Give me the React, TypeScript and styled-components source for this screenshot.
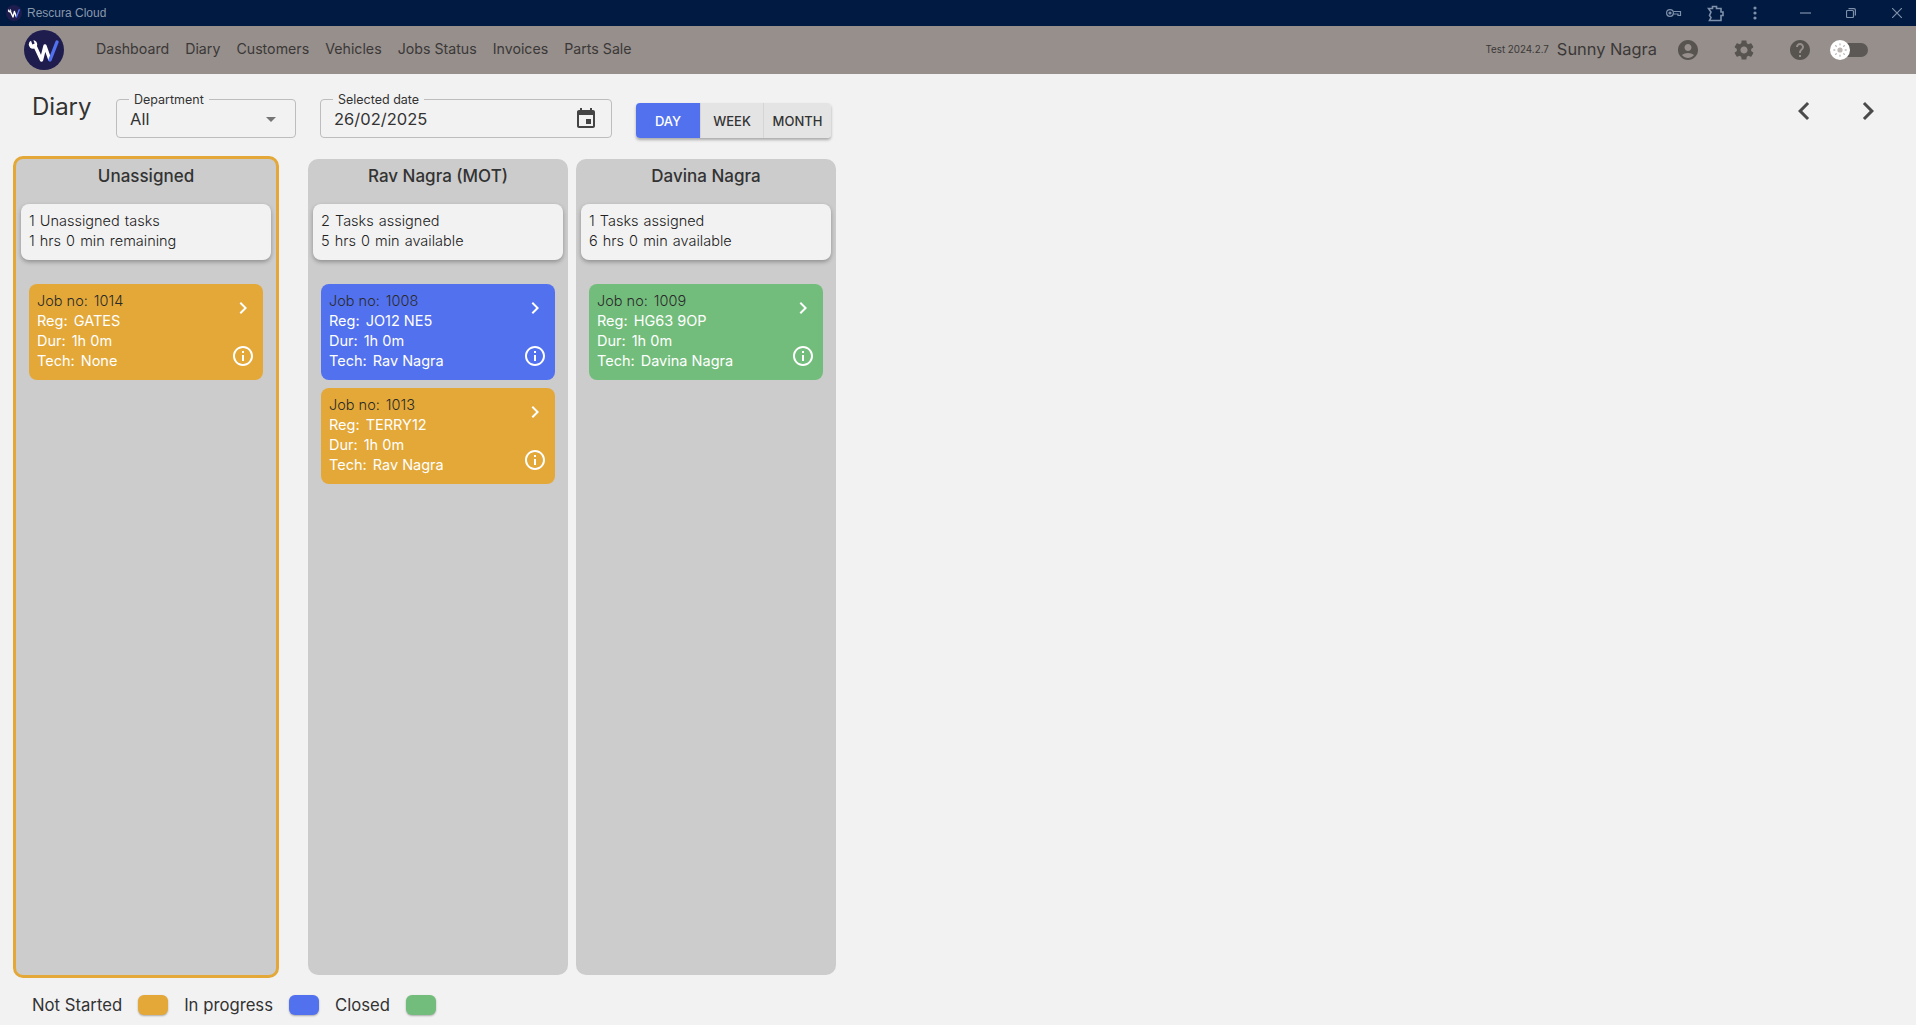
import React from "react";
import styled, { createGlobalStyle } from "styled-components";

const ICONS = {
  account:
    "M12 2C6.48 2 2 6.48 2 12s4.48 10 10 10 10-4.48 10-10S17.52 2 12 2zm0 4c1.93 0 3.5 1.57 3.5 3.5S13.93 13 12 13s-3.5-1.57-3.5-3.5S10.07 6 12 6zm0 14c-2.03 0-4.43-.82-6.14-2.88C7.55 15.8 9.68 15 12 15s4.45.8 6.14 2.12C16.43 19.18 14.03 20 12 20z",
  settings:
    "M19.14 12.94c.04-.3.06-.61.06-.94 0-.32-.02-.64-.07-.94l2.03-1.58c.18-.14.23-.41.12-.61l-1.92-3.32c-.12-.22-.37-.29-.59-.22l-2.39.96c-.5-.38-1.03-.7-1.62-.94l-.36-2.54c-.04-.24-.24-.41-.48-.41h-3.84c-.24 0-.43.17-.47.41l-.36 2.54c-.59.24-1.13.57-1.62.94l-2.39-.96c-.22-.08-.47 0-.59.22L2.74 8.87c-.12.21-.08.47.12.61l2.03 1.58c-.05.3-.09.63-.09.94s.02.64.07.94l-2.03 1.58c-.18.14-.23.41-.12.61l1.92 3.32c.12.22.37.29.59.22l2.39-.96c.5.38 1.03.7 1.62.94l.36 2.54c.05.24.24.41.48.41h3.84c.24 0 .44-.17.47-.41l.36-2.54c.59-.24 1.13-.56 1.62-.94l2.39.96c.22.08.47 0 .59-.22l1.92-3.32c.12-.22.07-.47-.12-.61l-2.01-1.58zM12 15.6c-1.98 0-3.6-1.62-3.6-3.6s1.62-3.6 3.6-3.6 3.6 1.62 3.6 3.6-1.62 3.6-3.6 3.6z",
  help: "M12 2C6.48 2 2 6.48 2 12s4.48 10 10 10 10-4.48 10-10S17.52 2 12 2zm1 17h-2v-2h2v2zm2.07-7.75l-.9.92C13.45 12.9 13 13.5 13 15h-2v-.5c0-1.1.45-2.1 1.17-2.83l1.24-1.26c.37-.36.59-.86.59-1.41 0-1.1-.9-2-2-2s-2 .9-2 2H8c0-2.21 1.79-4 4-4s4 1.79 4 4c0 .88-.36 1.68-.93 2.25z",
  event:
    "M17 12h-5v5h5v-5zM16 1v2H8V1H6v2H5c-1.11 0-1.99.9-1.99 2L3 19c0 1.1.89 2 2 2h14c1.1 0 2-.9 2-2V5c0-1.1-.9-2-2-2h-1V1h-2zm3 18H5V8h14v11z",
  info: "M11 7h2v2h-2zm0 4h2v6h-2zm1-9C6.48 2 2 6.48 2 12s4.48 10 10 10 10-4.48 10-10S17.52 2 12 2zm0 18c-4.41 0-8-3.59-8-8s3.59-8 8-8 8 3.59 8 8-3.59 8-8 8z",
  chevronRight: "M10 6 8.59 7.41 13.17 12l-4.58 4.59L10 18l6-6z",
  chevronLeft: "M15.41 7.41 14 6l-6 6 6 6 1.41-1.41L10.83 12z",
  dropDown: "m7 10 5 5 5-5z",
};

const STATUS_COLORS = {
  notStarted: "#e3a838",
  inProgress: "#5271ee",
  closed: "#73bd7c",
};

type Status = keyof typeof STATUS_COLORS;

const GlobalStyle = createGlobalStyle`
  html, body {
    margin: 0;
    padding: 0;
    background: #f2f2f2;
  }
  body {
    font-family: "Inter", "Noto Sans", sans-serif;
    color: #333;
  }
  * {
    box-sizing: border-box;
  }
`;

const Page = styled.div`
  width: 1916px;
  height: 1025px;
  overflow: hidden;
  display: flex;
  flex-direction: column;
  > * {
    flex: none;
  }
`;

const TitleBar = styled.div`
  height: 26px;
  background: #001a41;
  display: flex;
  align-items: center;
  padding-left: 6px;
  color: #8a98ad;
  font-family: "Liberation Sans", sans-serif;
  font-size: 12px;
`;

const TitleText = styled.span`
  margin-left: 5px;
`;

const TitleActions = styled.div`
  margin-left: auto;
  display: flex;
  align-items: center;
`;

const TitleIcon = styled.svg<{ $left: number }>`
  display: block;
  margin-left: ${(p) => p.$left}px;
  fill: none;
  stroke: #7f90ab;
  stroke-width: 1.2;
`;

const NavBar = styled.div`
  height: 48px;
  background: #968f8c;
  display: flex;
  align-items: center;
  padding-left: 24px;
`;

const NavLinks = styled.nav`
  display: flex;
  gap: 16px;
  margin: -3px 0 0 32px;
`;

const NavLink = styled.a`
  font-size: 14.2px;
  color: #3b3837;
`;

const NavRight = styled.div`
  margin-left: auto;
  display: flex;
  align-items: center;
  padding-right: 48px;
`;

const Version = styled.span`
  font-size: 9.8px;
  color: #3b3837;
  margin-top: -2px;
`;

const UserName = styled.span`
  font-size: 16.4px;
  color: #3b3837;
  margin: -2px 0 0 8px;
`;

const NavIcon = styled.svg<{ $left: number }>`
  display: block;
  width: 24px;
  height: 24px;
  fill: #57534f;
  margin-left: ${(p) => p.$left}px;
`;

const ThemeSwitch = styled.div`
  position: relative;
  width: 37px;
  height: 14px;
  margin-left: 19px;
  border-radius: 7px;
  background: #5c5856;
`;

const SwitchThumb = styled.div`
  position: absolute;
  left: -1px;
  top: -3px;
  width: 20px;
  height: 20px;
  border-radius: 50%;
  background: #fff;
  display: flex;
  align-items: center;
  justify-content: center;
`;

const Toolbar = styled.div`
  display: flex;
  align-items: flex-start;
  padding: 25px 0 0 32px;
  height: 82px;
`;

const PageTitle = styled.h1`
  margin: -8px 0 0;
  width: 84px;
  font-size: 24px;
  line-height: 32px;
  font-weight: 400;
  color: #333;
`;

const Field = styled.div<{ $width: number }>`
  position: relative;
  width: ${(p) => p.$width}px;
  height: 39px;
  margin-right: 24px;
  border: 1px solid #bdbdbd;
  border-radius: 4px;
  display: flex;
  align-items: center;
  padding: 0 6px 0 13px;
  font-size: 16.5px;
  color: #333;
`;

const FieldLabel = styled.span`
  position: absolute;
  left: 12px;
  top: -7px;
  padding: 0 5px;
  background: #f2f2f2;
  font-size: 12.5px;
  line-height: 14px;
  color: #333;
`;

const FieldIcon = styled.svg<{ $fill: string; $right: number }>`
  margin-left: auto;
  margin-right: ${(p) => p.$right}px;
  width: 24px;
  height: 24px;
  fill: ${(p) => p.$fill};
`;

const ToggleGroup = styled.div`
  display: flex;
  height: 35px;
  margin-top: 4px;
  border-radius: 4px;
  box-shadow: 0 2px 3px rgba(0, 0, 0, 0.3);
`;

const ToggleButton = styled.button<{ $active?: boolean; $width: number }>`
  width: ${(p) => p.$width}px;
  border: none;
  padding: 0;
  font-family: inherit;
  font-size: 13px;
  font-weight: 500;
  background: ${(p) => (p.$active ? "#5271ee" : "#e4e4e4")};
  color: ${(p) => (p.$active ? "#fff" : "#333")};
  border-left: ${(p) => (p.$active ? "none" : "1px solid #d5d5d5")};
  &:first-child {
    border-radius: 4px 0 0 4px;
  }
  &:last-child {
    border-radius: 0 4px 4px 0;
  }
`;

const PageNav = styled.div`
  margin-left: auto;
  margin-top: -6px;
  display: flex;
  gap: 28px;
  padding-right: 30px;
`;

const PageNavIcon = styled.svg`
  display: block;
  width: 36px;
  height: 36px;
  fill: #4a4a4a;
`;

const Board = styled.div`
  display: flex;
  align-items: flex-start;
  padding-left: 13px;
  height: 822px;
`;

const Column = styled.div<{ $highlight?: boolean }>`
  width: ${(p) => (p.$highlight ? 266 : 260)}px;
  height: ${(p) => (p.$highlight ? 822 : 816)}px;
  margin-top: ${(p) => (p.$highlight ? 0 : 3)}px;
  margin-right: ${(p) => (p.$highlight ? 29 : 8)}px;
  padding: 0 5px;
  background: #cccccc;
  border-radius: 10px;
  border: ${(p) => (p.$highlight ? "3px solid #e3a838" : "none")};
`;

const ColumnTitle = styled.div`
  height: 45px;
  line-height: 34px;
  text-align: center;
  font-size: 17px;
  font-weight: 500;
  color: #333;
`;

const Summary = styled.div`
  height: 56px;
  padding: 7px 8px;
  background: #f2f2f2;
  border-radius: 8px;
  box-shadow: 0 2px 4px rgba(0, 0, 0, 0.3);
  font-size: 14.5px;
  font-weight: 300;
  word-spacing: 1px;
  line-height: 20px;
  color: #222;
`;

const JobList = styled.div`
  display: flex;
  flex-direction: column;
  gap: 8px;
  padding: 24px 8px 0;
`;

const JobCard = styled.div<{ $status: Status }>`
  position: relative;
  height: 96px;
  padding: 7px 8px;
  border-radius: 8px;
  background: ${(p) => STATUS_COLORS[p.$status]};
  font-size: 14.5px;
  line-height: 20px;
  color: #fff;
`;

const JobLine = styled.div<{ $dark?: boolean }>`
  color: ${(p) => (p.$dark ? "#2a2a2a" : "#fff")};
  font-weight: ${(p) => (p.$dark ? 300 : 400)};
`;

const Label = styled.span`
  margin-right: 6px;
`;

const CardIcon = styled.svg<{ $top: number }>`
  position: absolute;
  right: 8px;
  top: ${(p) => p.$top}px;
  width: 24px;
  height: 24px;
  fill: #fff;
`;

const Legend = styled.div`
  display: flex;
  align-items: center;
  padding-left: 32px;
  height: 47px;
  font-size: 16.7px;
  color: #333;
  margin-top: 3px;
`;

const LegendText = styled.span`
  margin-right: 16px;
`;

const Swatch = styled.span<{ $status: Status }>`
  width: 30px;
  height: 20px;
  margin-right: 16px;
  border-radius: 6px;
  background: ${(p) => STATUS_COLORS[p.$status]};
  box-shadow: 0 1px 2px rgba(0, 0, 0, 0.3);
`;

const Logo = ({ size }: { size: number }) => (
  <svg width={size} height={size} viewBox="0 0 40 40" style={{ display: "block" }}>
    <circle cx="20" cy="20" r="20" fill="#1f1d4e" />
    <path d="M11 16 L17.5 30 L21 16 L26 30" fill="none" stroke="#fff" strokeWidth="3.4" strokeLinejoin="round" />
    <path d="M26 30 L33 12" fill="none" stroke="#5271ee" strokeWidth="3.4" strokeLinecap="round" />
    <circle cx="9" cy="14.5" r="4.2" fill="#fff" />
    <path d="M7.5 8.5 L9.5 14" stroke="#1f1d4e" strokeWidth="2.4" />
  </svg>
);

const SunGlyph = () => (
  <svg width="14" height="14" viewBox="0 0 14 14">
    <circle cx="7" cy="7" r="2.6" fill="#bdb8b5" />
    <g stroke="#bdb8b5" strokeWidth="1.3" strokeLinecap="round">
      <path d="M7 .8v1M7 12.2v1M.8 7h1M12.2 7h1M2.6 2.6l.7.7M10.7 10.7l.7.7M2.6 11.4l.7-.7M10.7 3.3l.7-.7" />
    </g>
  </svg>
);

type Job = { no: number; reg: string; tech: string; status: Status };

type ColumnData = {
  name: string;
  highlight?: boolean;
  summary: [string, string];
  jobs: Job[];
};

const COLUMNS: ColumnData[] = [
  {
    name: "Unassigned",
    highlight: true,
    summary: ["1 Unassigned tasks", "1 hrs 0 min remaining"],
    jobs: [{ no: 1014, reg: "GATES", tech: "None", status: "notStarted" }],
  },
  {
    name: "Rav Nagra (MOT)",
    summary: ["2 Tasks assigned", "5 hrs 0 min available"],
    jobs: [
      { no: 1008, reg: "JO12 NE5", tech: "Rav Nagra", status: "inProgress" },
      { no: 1013, reg: "TERRY12", tech: "Rav Nagra", status: "notStarted" },
    ],
  },
  {
    name: "Davina Nagra",
    summary: ["1 Tasks assigned", "6 hrs 0 min available"],
    jobs: [{ no: 1009, reg: "HG63 9OP", tech: "Davina Nagra", status: "closed" }],
  },
];

const NAV_ITEMS = ["Dashboard", "Diary", "Customers", "Vehicles", "Jobs Status", "Invoices", "Parts Sale"];

const JobTile = ({ job }: { job: Job }) => (
  <JobCard $status={job.status}>
    <JobLine $dark>
      <Label>Job no:</Label>
      {job.no}
    </JobLine>
    <JobLine>
      <Label>Reg:</Label>
      {job.reg}
    </JobLine>
    <JobLine>
      <Label>Dur:</Label>1h 0m
    </JobLine>
    <JobLine>
      <Label>Tech:</Label>
      {job.tech}
    </JobLine>
    <CardIcon $top={12} viewBox="0 0 24 24">
      <path d={ICONS.chevronRight} />
    </CardIcon>
    <CardIcon $top={60} viewBox="0 0 24 24">
      <path d={ICONS.info} />
    </CardIcon>
  </JobCard>
);

export default function App() {
  return (
    <Page>
      <GlobalStyle />
      <TitleBar>
        <Logo size={16} />
        <TitleText>Rescura Cloud</TitleText>
        <TitleActions>
          <TitleIcon $left={0} width="16" height="10" viewBox="0 0 16 10">
            <circle cx="4" cy="5" r="3.4" />
            <circle cx="4" cy="5" r="1" fill="#7f90ab" />
            <path d="M7.5 3.5h7v4h-2.5v-1.5h-4.5" />
          </TitleIcon>
          <TitleIcon $left={25} width="17" height="17" viewBox="0 0 17 17" style={{ strokeWidth: 1.6 }}>
            <path d="M1.5 3.5h4v-2h4v2h4.5v3.5h2v3.5h-2v5h-11.5l1.5-3-1.5-2 1.5-3.5z" />
          </TitleIcon>
          <TitleIcon $left={29} width="4" height="14" viewBox="0 0 4 14" style={{ fill: "#7f90ab", stroke: "none" }}>
            <circle cx="2" cy="2" r="1.6" />
            <circle cx="2" cy="7" r="1.6" />
            <circle cx="2" cy="12" r="1.6" />
          </TitleIcon>
          <TitleIcon $left={43} width="12" height="2" viewBox="0 0 12 2">
            <path d="M0 1h11" />
          </TitleIcon>
          <TitleIcon $left={34} width="10" height="10" viewBox="0 0 10 10">
            <rect x="0.5" y="2.5" width="7" height="7" rx="1" />
            <path d="M2.5 .6h5.5a1.4 1.4 0 0 1 1.4 1.4v5.5" />
          </TitleIcon>
          <TitleIcon $left={36} width="10" height="10" viewBox="0 0 10 10" style={{ marginRight: 14 }}>
            <path d="M0 0l10 10M10 0L0 10" />
          </TitleIcon>
        </TitleActions>
      </TitleBar>
      <NavBar>
        <Logo size={40} />
        <NavLinks>
          {NAV_ITEMS.map((item) => (
            <NavLink key={item}>{item}</NavLink>
          ))}
        </NavLinks>
        <NavRight>
          <Version>Test 2024.2.7</Version>
          <UserName>Sunny Nagra</UserName>
          <NavIcon $left={19} viewBox="0 0 24 24">
            <path d={ICONS.account} />
          </NavIcon>
          <NavIcon $left={32} viewBox="0 0 24 24">
            <path d={ICONS.settings} />
          </NavIcon>
          <NavIcon $left={32} viewBox="0 0 24 24">
            <path d={ICONS.help} />
          </NavIcon>
          <ThemeSwitch>
            <SwitchThumb>
              <SunGlyph />
            </SwitchThumb>
          </ThemeSwitch>
        </NavRight>
      </NavBar>
      <Toolbar>
        <PageTitle>Diary</PageTitle>
        <Field $width={180}>
          <FieldLabel>Department</FieldLabel>
          All
          <FieldIcon $fill="#757575" $right={6} viewBox="0 0 24 24">
            <path d={ICONS.dropDown} />
          </FieldIcon>
        </Field>
        <Field $width={292}>
          <FieldLabel>Selected date</FieldLabel>
          26/02/2025
          <FieldIcon $fill="#444" $right={7} viewBox="0 0 24 24">
            <path d={ICONS.event} />
          </FieldIcon>
        </Field>
        <ToggleGroup>
          <ToggleButton $active $width={64}>DAY</ToggleButton>
          <ToggleButton $width={63}>WEEK</ToggleButton>
          <ToggleButton $width={68}>MONTH</ToggleButton>
        </ToggleGroup>
        <PageNav>
          <PageNavIcon viewBox="0 0 24 24">
            <path d={ICONS.chevronLeft} />
          </PageNavIcon>
          <PageNavIcon viewBox="0 0 24 24">
            <path d={ICONS.chevronRight} />
          </PageNavIcon>
        </PageNav>
      </Toolbar>
      <Board>
        {COLUMNS.map((col) => (
          <Column key={col.name} $highlight={col.highlight}>
            <ColumnTitle>{col.name}</ColumnTitle>
            <Summary>
              {col.summary[0]}
              <br />
              {col.summary[1]}
            </Summary>
            <JobList>
              {col.jobs.map((job) => (
                <JobTile key={job.no} job={job} />
              ))}
            </JobList>
          </Column>
        ))}
      </Board>
      <Legend>
        <LegendText>Not Started</LegendText>
        <Swatch $status="notStarted" />
        <LegendText>In progress</LegendText>
        <Swatch $status="inProgress" />
        <LegendText>Closed</LegendText>
        <Swatch $status="closed" />
      </Legend>
    </Page>
  );
}
